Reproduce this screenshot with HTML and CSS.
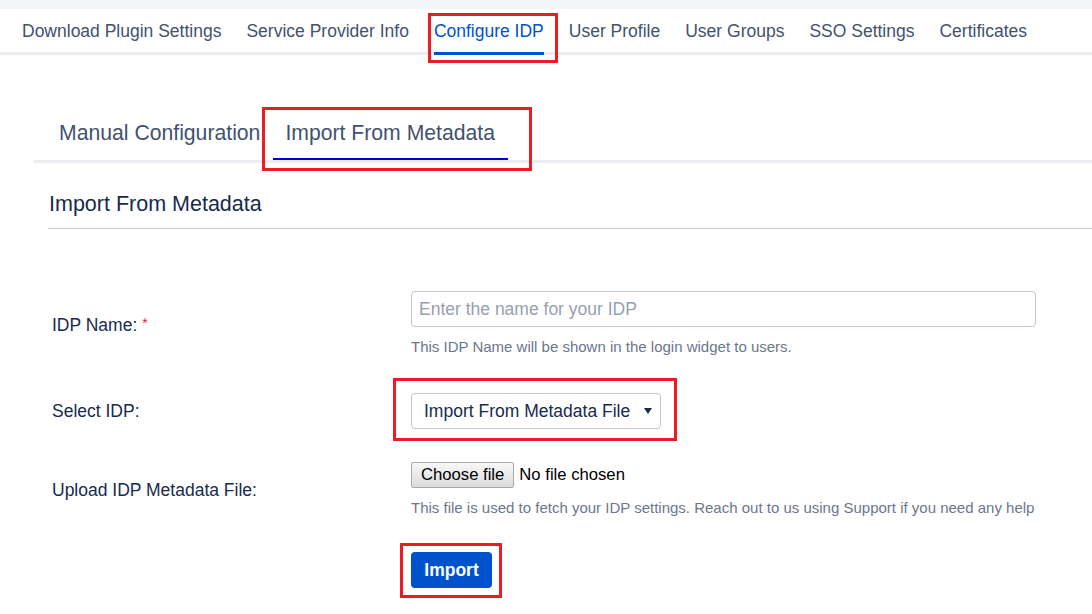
FILE: index.html
```html
<!DOCTYPE html>
<html lang="en">
<head>
<meta charset="utf-8">
<title>Configure IDP</title>
<link rel="stylesheet" href="styles.css">
</head>
<body>
<div class="topbar"></div>
<nav class="main-nav">
  <a class="nav-item">Download Plugin Settings</a>
  <a class="nav-item">Service Provider Info</a>
  <a class="nav-item active">Configure IDP<span class="mark mark-nav"></span></a>
  <a class="nav-item">User Profile</a>
  <a class="nav-item">User Groups</a>
  <a class="nav-item">SSO Settings</a>
  <a class="nav-item">Certificates</a>
</nav>
<main class="page">
  <div class="tabs">
    <div class="tab">Manual Configuration</div>
    <div class="tab active">Import From Metadata<span class="mark mark-tab"></span></div>
  </div>
  <section class="panel">
    <h2 class="panel-title">Import From Metadata</h2>
    <form class="form">
      <div class="row">
        <label class="label" for="idp-name">IDP Name: <span class="req">*</span></label>
        <div class="field">
          <input id="idp-name" class="text-input" type="text" placeholder="Enter the name for your IDP">
          <p class="help">This IDP Name will be shown in the login widget to users.</p>
        </div>
      </div>
      <div class="row row-select">
        <label class="label" for="idp-select">Select IDP:</label>
        <div class="field">
          <div class="select-wrap">
            <select id="idp-select" class="select">
              <option>Import From Metadata File</option>
            </select>
            <svg class="select-arrow" width="8" height="6" viewBox="0 0 8 6"><path d="M0 0H8L4 6Z" fill="#172b4d"/></svg>
            <span class="mark mark-select"></span>
          </div>
        </div>
      </div>
      <div class="row row-file">
        <label class="label" for="idp-file">Upload IDP Metadata File:</label>
        <div class="field">
          <div class="file-control">
            <input id="idp-file" class="file-native" type="file">
            <label class="file-btn" for="idp-file">Choose file</label>
            <span class="file-status">No file chosen</span>
          </div>
          <p class="help">This file is used to fetch your IDP settings. Reach out to us using Support if you need any help</p>
        </div>
      </div>
      <div class="row row-submit">
        <div class="submit-wrap">
          <button class="btn-primary" type="button">Import</button>
          <span class="mark mark-btn"></span>
        </div>
      </div>
    </form>
  </section>
</main>
</body>
</html>
```
FILE: styles.css
```css
body {
  margin: 0;
  background: #ffffff;
  color: #172b4d;
  font-family: "Liberation Sans", Arial, sans-serif;
}

.topbar {
  height: 9px;
  background: #f4f5f7;
}

.main-nav {
  display: flex;
  gap: 25px;
  padding-left: 22px;
  box-shadow: inset 0 -3px 0 #ebecf0;
}

.nav-item {
  font-size: 17.5px;
  line-height: 20px;
  padding: 12px 0 11px;
  border-bottom: 3px solid transparent;
  color: #42526e;
  text-decoration: none;
  white-space: nowrap;
}

.nav-item.active {
  position: relative;
  color: #0052cc;
  border-bottom-color: #0052cc;
}

.mark {
  position: absolute;
  border: 3px solid #ed1c24;
  pointer-events: none;
}

.mark-nav { top: 4px; bottom: -11px; left: -6px; right: -14px; }
.mark-tab { top: -2px; bottom: -13px; left: -11px; right: -24px; }
.mark-select { top: -15px; bottom: -12px; left: -18px; right: -16px; }
.mark-btn { top: -9px; bottom: -10px; left: -11px; right: -10px; }

.page {
  padding: 0 0 40px 34px;
}

.tabs {
  display: flex;
  margin-top: 54px;
  padding-left: 13px;
  border-bottom: 3px solid #ebecf0;
}

.tab {
  font-size: 21.2px;
  line-height: 24px;
  padding: 12px 13px 13px 12px;
  border-bottom: 2px solid transparent;
  color: #42526e;
  white-space: nowrap;
}

.tab.active {
  position: relative;
  border-bottom-color: #0000cc;
}

.panel {
  margin-left: 14px;
}

.panel-title {
  margin: 28px 0 0;
  padding: 0 0 11px 1px;
  font-size: 21.5px;
  line-height: 26px;
  font-weight: normal;
  color: #172b4d;
  border-bottom: 1px solid #cccccc;
}

.form {
  margin-top: 62px;
  padding-left: 4px;
}

.row {
  display: grid;
  grid-template-columns: 359px 1fr;
  align-items: center;
}

.row-select { margin-top: 36px; }
.row-file { margin-top: 33px; }
.row-submit { margin-top: 34px; }

.label {
  font-size: 17.5px;
  line-height: 20px;
  color: #172b4d;
}

.req {
  color: #e5202a;
  font-size: 14px;
  vertical-align: 3px;
}

.field {
  display: flex;
  flex-direction: column;
  align-items: flex-start;
}

.text-input {
  box-sizing: border-box;
  display: block;
  width: 625px;
  height: 36px;
  margin: 0;
  padding: 0 7px;
  border: 1px solid #c1c7d0;
  border-radius: 4px;
  background: #ffffff;
  font-family: "Liberation Sans", Arial, sans-serif;
  font-size: 17.5px;
  color: #172b4d;
}

.text-input::placeholder {
  color: #97a0af;
}

.help {
  margin: 10px 0 0;
  font-size: 15px;
  line-height: 20px;
  color: #6b778c;
  white-space: nowrap;
}

.select-wrap {
  position: relative;
  width: 250px;
}

.select {
  box-sizing: border-box;
  display: block;
  width: 100%;
  height: 36px;
  margin: 0;
  padding: 0 28px 0 12px;
  border: 1px solid #c1c7d0;
  border-radius: 4px;
  background: #ffffff;
  appearance: none;
  -webkit-appearance: none;
  font-family: "Liberation Sans", Arial, sans-serif;
  font-size: 17.5px;
  color: #172b4d;
}

.select-arrow {
  position: absolute;
  top: 15px;
  right: 9px;
  pointer-events: none;
}

.file-control {
  display: flex;
  align-items: center;
  gap: 5px;
  height: 26px;
  font-family: "Liberation Sans", Arial, sans-serif;
  font-size: 16.67px;
  color: #000000;
}

.file-native {
  display: none;
}

.file-btn {
  box-sizing: border-box;
  display: flex;
  align-items: center;
  height: 26px;
  padding: 0 9px;
  border: 1px solid #a9a9a9;
  border-radius: 2px;
  background: linear-gradient(#f8f8f8, #dcdcdc);
  color: #000000;
  white-space: nowrap;
}

.file-status {
  white-space: nowrap;
}

.submit-wrap {
  grid-column: 2;
  justify-self: start;
  position: relative;
  display: flex;
}

.btn-primary {
  box-sizing: border-box;
  width: 81px;
  height: 36px;
  margin: 0;
  padding: 0;
  border: none;
  border-radius: 4px;
  background: #0052cc;
  color: #ffffff;
  font-family: "Liberation Sans", Arial, sans-serif;
  font-size: 17.5px;
  font-weight: bold;
}
```
